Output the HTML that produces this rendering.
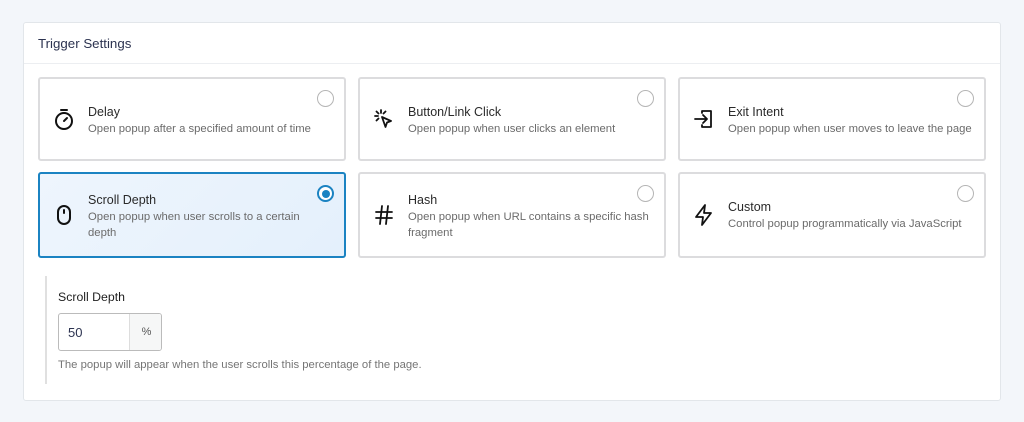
<!DOCTYPE html>
<html><head><style>
*{box-sizing:border-box;margin:0;padding:0}
body{width:1024px;height:422px;background:#f3f6fa;font-family:"Liberation Sans",sans-serif;position:relative;overflow:hidden}
.panel{position:absolute;left:23px;top:22px;width:978px;height:379px;background:#fff;border:1px solid #e2e6ea;border-radius:3px}
.hdr{height:41px;border-bottom:1px solid #eceef1;padding:13px 0 0 14px;font-size:13.3px;color:#2c3350}
.card{position:absolute;width:308px;border:2px solid #dcdcde;border-radius:3px;background:#fff}
.card.sel{border-color:#1b83c2;background:linear-gradient(135deg,#eef5fd,#e4f0fc)}
.card svg.ic{position:absolute;left:12px;width:24px;height:24px}
.t{position:absolute;left:48px;font-size:12.5px;color:#2a2a2a}
.d{position:absolute;left:48px;font-size:11.3px;color:#6b6b6b;line-height:16px;white-space:nowrap}
.r{position:absolute;right:10px;top:11px;width:17px;height:17px;border:1.5px solid #b5b5b5;border-radius:50%;background:#fff}
.sel .r{border:2px solid #1b83c2}
.sel .r:after{content:"";position:absolute;left:2.5px;top:2.5px;width:8px;height:8px;border-radius:50%;background:#1b83c2}
</style></head><body>
<div class="panel"><div class="hdr">Trigger Settings</div></div>

<div class="card" style="left:38px;top:77px;height:84px">
<svg class="ic" style="top:28px" viewBox="0 0 24 24" fill="none" stroke="#111" stroke-width="2" stroke-linecap="round"><circle cx="12" cy="14" r="8"/><path d="M9 3h6M12 14l3-3"/></svg>
<div class="t" style="top:26px">Delay</div><div class="d" style="top:42px">Open popup after a specified amount of time</div><div class="r"></div></div>

<div class="card" style="left:358px;top:77px;height:84px">
<svg class="ic" style="top:28px" viewBox="0 0 24 24" fill="none" stroke="#111" stroke-width="1.8" stroke-linecap="round"><path d="M9 3v3M3 9h3M4.5 4.5l2 2M13.5 4.5l-2 2M4.5 13.5l2-2"/><path d="M10 10l9 4-4 1.5L13.5 20z" stroke-linejoin="round"/></svg>
<div class="t" style="top:26px">Button/Link Click</div><div class="d" style="top:42px">Open popup when user clicks an element</div><div class="r"></div></div>

<div class="card" style="left:678px;top:77px;height:84px">
<svg class="ic" style="top:28px" viewBox="0 0 24 24" fill="none" stroke="#111" stroke-width="1.8" stroke-linecap="round" stroke-linejoin="round"><path d="M10 6V4h9v16h-9v-2M3 12h12M11 8l4 4-4 4"/></svg>
<div class="t" style="top:26px">Exit Intent</div><div class="d" style="top:42px">Open popup when user moves to leave the page</div><div class="r"></div></div>

<div class="card sel" style="left:38px;top:172px;height:86px">
<svg class="ic" style="top:29px" viewBox="0 0 24 24" fill="none" stroke="#111" stroke-width="2" stroke-linecap="round"><rect x="6" y="3" width="12" height="18" rx="6"/><path d="M12 7v3"/></svg>
<div class="t" style="top:19px">Scroll Depth</div><div class="d" style="top:35px">Open popup when user scrolls to a certain<br>depth</div><div class="r"></div></div>

<div class="card" style="left:358px;top:172px;height:86px">
<svg class="ic" style="top:29px" viewBox="0 0 24 24" fill="none" stroke="#111" stroke-width="1.8" stroke-linecap="round"><path d="M4 9h16M4 15h16M10 3L8 21M16 3l-2 18"/></svg>
<div class="t" style="top:19px">Hash</div><div class="d" style="top:35px">Open popup when URL contains a specific hash<br>fragment</div><div class="r"></div></div>

<div class="card" style="left:678px;top:172px;height:86px">
<svg class="ic" style="top:29px" viewBox="0 0 24 24" fill="none" stroke="#111" stroke-width="1.8" stroke-linejoin="round"><path d="M13 2L4 14h7l-1 8 9-12h-7z"/></svg>
<div class="t" style="top:26px">Custom</div><div class="d" style="top:42px">Control popup programmatically via JavaScript</div><div class="r"></div></div>

<div style="position:absolute;left:45px;top:276px;width:2px;height:108px;background:#e0e0e0"></div>
<div style="position:absolute;left:58px;top:290px;font-size:12.3px;color:#1e1e1e">Scroll Depth</div>
<div style="position:absolute;left:58px;top:313px;width:104px;height:38px;border:1px solid #bbb;border-radius:3px;overflow:hidden;background:#fff">
<div style="position:absolute;left:9px;top:11px;font-size:13px;color:#2c3350">50</div>
<div style="position:absolute;left:70px;top:0;width:34px;height:38px;background:#f6f7f7;border-left:1px solid #ddd;font-size:11px;color:#555;text-align:center;line-height:36px">%</div></div>
<div style="position:absolute;left:58px;top:359px;font-size:11.3px;color:#757575">The popup will appear when the user scrolls this percentage of the page.</div>
</body></html>
